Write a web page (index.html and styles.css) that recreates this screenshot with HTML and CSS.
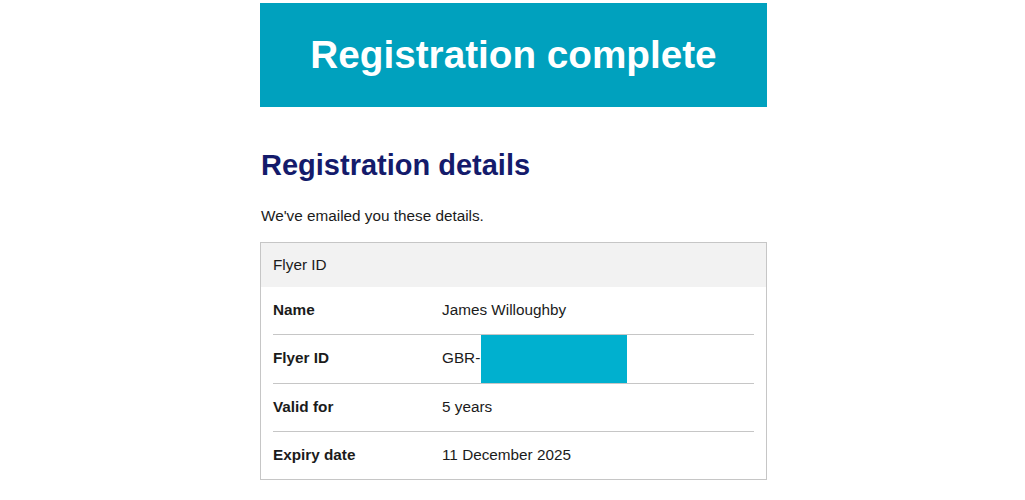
FILE: index.html
```html
<!DOCTYPE html>
<html lang="en">
<head>
<meta charset="utf-8">
<title>Registration complete</title>
<link rel="stylesheet" href="styles.css">
</head>
<body>
<main class="page">
  <div class="banner">
    <h1 class="banner-title">Registration complete</h1>
  </div>
  <h2 class="section-title">Registration details</h2>
  <p class="intro">We've emailed you these details.</p>
  <div class="card">
    <div class="card-header">Flyer ID</div>
    <dl class="rows">
      <div class="row">
        <dt class="label">Name</dt>
        <dd class="value">James Willoughby</dd>
      </div>
      <div class="row row-tall">
        <dt class="label">Flyer ID</dt>
        <dd class="value">GBR-</dd>
        <span class="redaction"></span>
      </div>
      <div class="row">
        <dt class="label">Valid for</dt>
        <dd class="value">5 years</dd>
      </div>
      <div class="row">
        <dt class="label">Expiry date</dt>
        <dd class="value">11 December 2025</dd>
      </div>
    </dl>
  </div>
</main>
</body>
</html>
```

FILE: styles.css
```css
* { box-sizing: border-box; }
html, body { margin: 0; padding: 0; background: #ffffff; }
body {
  font-family: "Liberation Sans", Arial, sans-serif;
  color: #1b1b1b;
  padding-left: 2px;
}
.page {
  width: 507px;
  margin: 0 auto;
  padding-top: 3px;
}
.banner {
  background: #00a1be;
  height: 104px;
  display: flex;
  align-items: center;
  justify-content: center;
}
.banner-title {
  margin: 0;
  color: #ffffff;
  font-size: 38.7px;
  font-weight: 700;
  line-height: 1;
}
.section-title {
  margin: 41px 0 0 1px;
  color: #141b6b;
  font-size: 29px;
  font-weight: 700;
  line-height: 34px;
}
.intro {
  margin: 24px 0 0 1px;
  font-size: 15.3px;
  line-height: 20px;
}
.card {
  margin-top: 16px;
  border: 1px solid #c6c6c6;
}
.card-header {
  background: #f2f2f2;
  padding: 13px 12px 14px;
  font-size: 15.3px;
  line-height: 17px;
}
.rows {
  margin: 0 12px;
  padding: 0;
}
.row {
  position: relative;
  display: flex;
  padding: 14px 0 16px;
  font-size: 15.3px;
  line-height: 17px;
  border-top: 1px solid #c6c6c6;
}
.row:first-child { border-top: none; }
.row-tall { padding-bottom: 17px; }
.label {
  width: 169px;
  margin: 0;
  font-weight: 700;
}
.value {
  margin: 0;
}
.redaction {
  position: absolute;
  left: 208px;
  top: 0;
  width: 146px;
  height: 49px;
  background: #00b0cf;
}
```
